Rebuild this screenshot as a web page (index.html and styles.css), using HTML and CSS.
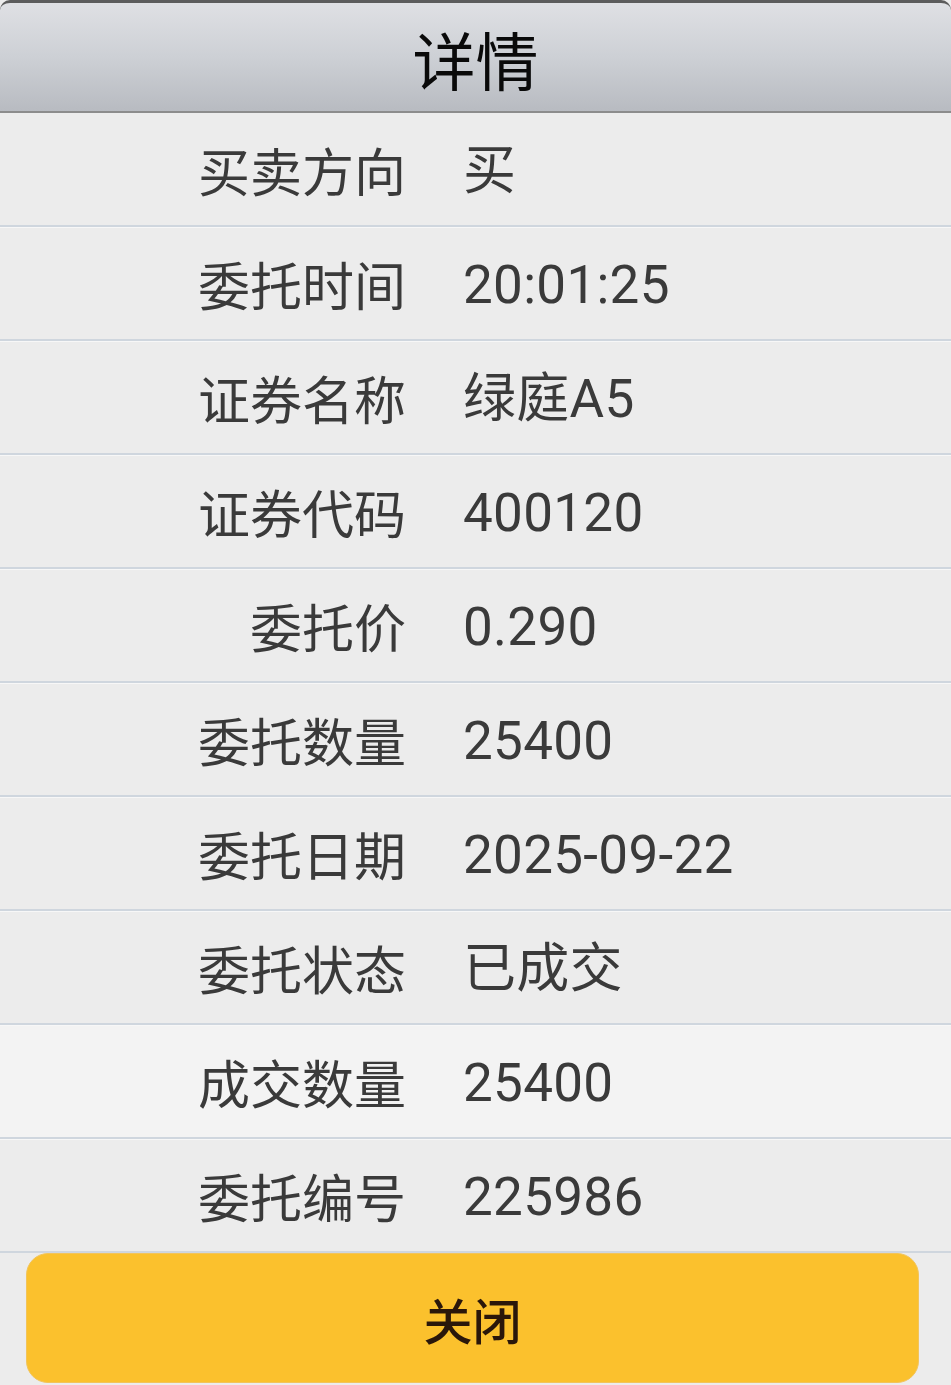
FILE: index.html
```html
<!DOCTYPE html>
<html lang="zh-CN">
<head>
<meta charset="utf-8">
<title>详情</title>
<link rel="stylesheet" href="styles.css">
</head>
<body>
<div class="page">
  <header class="header"><h1 class="title">详情</h1></header>
  <div class="list">
    <div class="row"><span class="label">买卖方向</span><span class="value">买</span></div>
    <div class="row"><span class="label">委托时间</span><span class="value">20:01:25</span></div>
    <div class="row"><span class="label">证券名称</span><span class="value">绿庭A5</span></div>
    <div class="row"><span class="label">证券代码</span><span class="value">400120</span></div>
    <div class="row"><span class="label">委托价</span><span class="value">0.290</span></div>
    <div class="row"><span class="label">委托数量</span><span class="value">25400</span></div>
    <div class="row"><span class="label">委托日期</span><span class="value">2025-09-22</span></div>
    <div class="row"><span class="label">委托状态</span><span class="value">已成交</span></div>
    <div class="row row-light"><span class="label">成交数量</span><span class="value">25400</span></div>
    <div class="row"><span class="label">委托编号</span><span class="value">225986</span></div>
  </div>
  <div class="footer"><button class="close-btn">关闭</button></div>
</div>
</body>
</html>
```
FILE: styles.css
```css
* { box-sizing: border-box; }
html, body {
  margin: 0;
  padding: 0;
  background: #ececec;
  font-family: "Noto Sans CJK SC", "Noto Sans", sans-serif;
}
.page {
  width: 951px;
  height: 1385px;
  overflow: hidden;
  background: #ececec;
}
.header {
  height: 113px;
  border-top: 3px solid #5c5c5c;
  border-bottom: 2px solid #8c8c8c;
  border-radius: 10px 10px 0 0;
  background: linear-gradient(to bottom, #dfe0e4 0%, #cdd0d5 50%, #b8bbc1 100%);
  display: flex;
  align-items: center;
  justify-content: center;
}
.title {
  margin: 0;
  font-size: 63px;
  font-weight: 400;
  color: #0a0a0a;
  line-height: 1;
  letter-spacing: 0;
}
.list { display: flex; flex-direction: column; }
.row {
  height: 114px;
  display: flex;
  align-items: center;
  border-top: 1px solid #f7f7f7;
  border-bottom: 2px solid #cfd6de;
  background: #ececec;
  color: #3a3a3a;
  font-size: 52px;
  line-height: 1;
}
.row:first-child { border-top-color: #ececec; }
.row-light { background: #f3f3f3; }
.label {
  width: 406px;
  text-align: right;
  flex: none;
}
.value {
  margin-left: 57px;
  padding-top: 4px;
  font-family: Roboto, "Noto Sans CJK SC", sans-serif;
  font-size: 53px;
  letter-spacing: 0.3px;
}
.footer {
  padding: 0 32px 0 26px;
}
.close-btn {
  display: block;
  width: 100%;
  height: 130px;
  border: 1px solid #f2c45a;
  border-radius: 22px;
  background: #fbc12d;
  color: #2a170a;
  font-family: "Noto Sans CJK SC", "Noto Sans", sans-serif;
  font-size: 49px;
  font-weight: 500;
  padding: 0;
}
```
